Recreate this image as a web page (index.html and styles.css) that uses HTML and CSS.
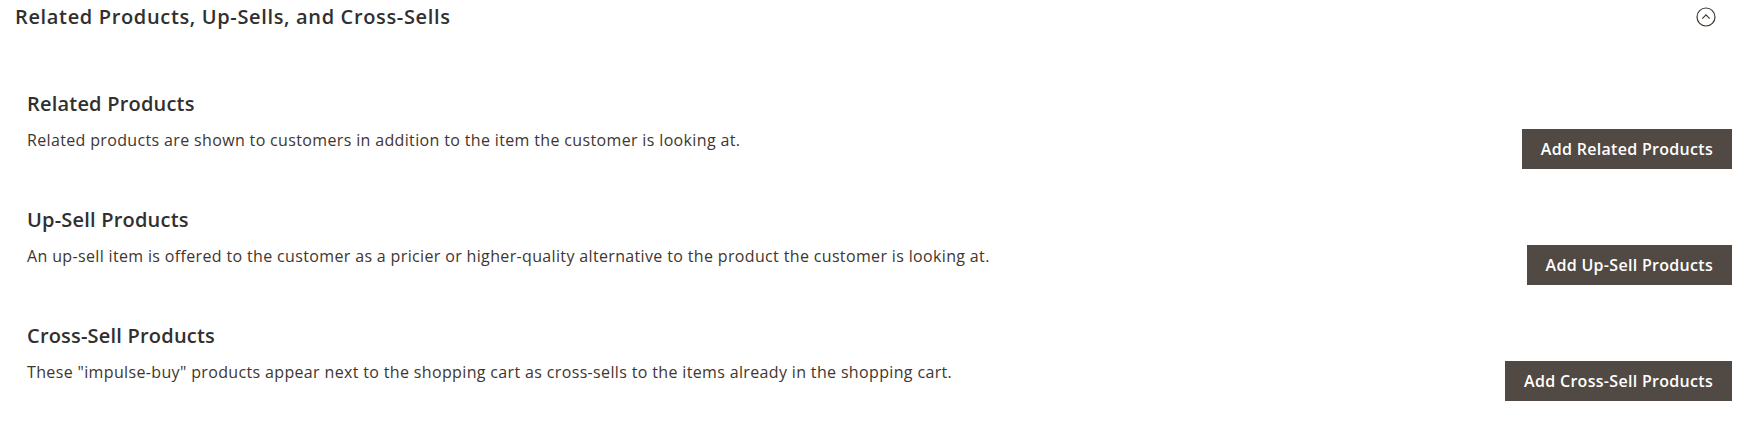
FILE: index.html
```html
<!DOCTYPE html>
<html lang="en">
<head>
    <meta charset="UTF-8">
    <meta name="viewport" content="width=device-width, initial-scale=1.0">
    <title>Related Products, Up-Sells, and Cross-Sells</title>
    <link rel="stylesheet" href="styles.css">
</head>
<body>
    <div class="block">
        <div class="block-title">
            <span>Related Products, Up-Sells, and Cross-Sells</span>
            <svg class="toggle" width="20" height="20" viewBox="0 0 20 20">
                <circle cx="10" cy="10" r="9" fill="none" stroke="#41362f" stroke-width="1.2"/>
                <path d="M6.3 11.6 L10 7.9 L13.7 11.6" fill="none" stroke="#41362f" stroke-width="1.2"/>
            </svg>
        </div>

        <div class="block-content">
            <div class="row">
                <h2>Related Products</h2>
                <p>Related products are shown to customers in addition to the item the customer is looking at.</p>
                <button>Add Related Products</button>
            </div>
            <div class="row">
                <h2>Up-Sell Products</h2>
                <p>An up-sell item is offered to the customer as a pricier or higher-quality alternative to the product the customer is looking at.</p>
                <button>Add Up-Sell Products</button>
            </div>
            <div class="row">
                <h2>Cross-Sell Products</h2>
                <p>These "impulse-buy" products appear next to the shopping cart as cross-sells to the items already in the shopping cart.</p>
                <button>Add Cross-Sell Products</button>
            </div>
        </div>
    </div>
</body>
</html>
```

FILE: styles.css
```css
body {
    font-family: "Open Sans", Arial, sans-serif;
    background-color: #ffffff;
    color: #41362f;
    margin: 0;
    padding: 0;
}
.block {
    padding: 0 14px 0 15px;
}
.block-title {
    display: flex;
    justify-content: space-between;
    align-items: center;
    height: 32px;
    font-size: 20px;
    font-weight: 600;
    letter-spacing: 0.65px;
    color: #303030;
}
.block-title .toggle {
    margin-right: 16px;
    margin-top: 2px;
}
.block-content {
    padding: 58px 0 0 12px;
}
.row {
    display: grid;
    grid-template-columns: 1fr auto;
    row-gap: 12px;
    margin-bottom: 37px;
}
.row h2 {
    grid-column: 1 / -1;
    margin: 0;
    font-size: 20px;
    line-height: 27px;
    font-weight: 600;
    letter-spacing: 0.2px;
    color: #303030;
}
.row p {
    margin: 0;
    font-size: 16px;
    line-height: 22px;
    letter-spacing: 0.35px;
    color: #41362f;
}
.row button {
    height: 40px;
    padding: 0 19px;
    background-color: #514943;
    color: #ffffff;
    border: none;
    border-radius: 0;
    font-family: "Open Sans", Arial, sans-serif;
    font-size: 16px;
    font-weight: 600;
    letter-spacing: 0.3px;
    cursor: pointer;
}
```
